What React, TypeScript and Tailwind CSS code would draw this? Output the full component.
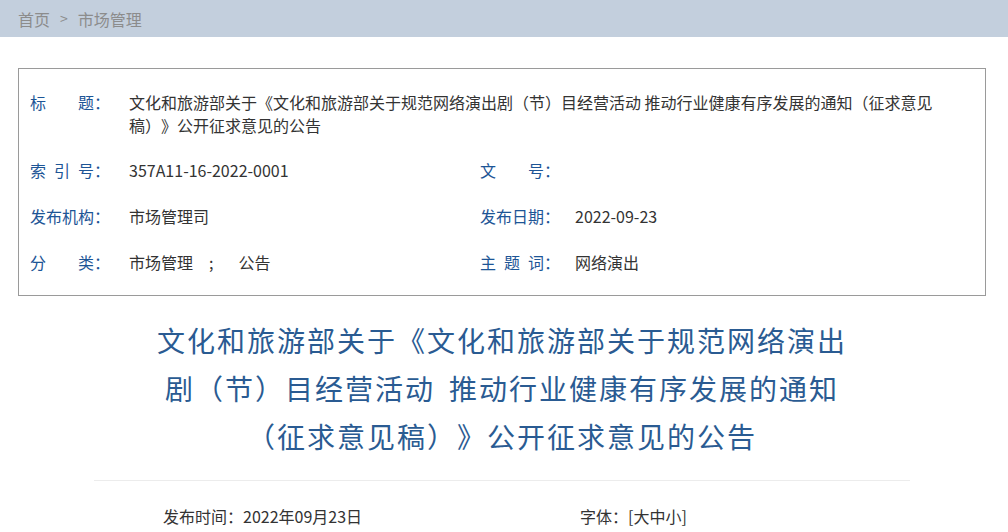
import React from "react";

const font = { fontFamily: '"Noto Sans CJK SC", "Noto Sans", sans-serif' };

function Row({ children }: { children: React.ReactNode }) {
  return <div className="flex h-[46px] items-center">{children}</div>;
}

export default function App() {
  return (
    <div className="w-[1008px] h-[532px] overflow-hidden bg-white [text-spacing-trim:space-all]" style={font}>
      <div className="h-[37px] bg-[#c3cfdd] flex items-center pl-[18px] text-[16px] text-[#8c8c8c]">
        <span>首页</span>
        <span className="ml-[10px] mr-[10px] text-[14px]">&gt;</span>
        <span>市场管理</span>
      </div>
      <div className="mx-[18px] w-[968px]">
        <div className="mt-[31px] border border-[#9a9a9a] pt-[22px] pb-[10px] pl-[11px] text-[16px]">
          <div className="flex leading-[23px] mb-[10px]">
            <div className="w-[99px] shrink-0 text-[#1d5596]">标　　题：</div>
            <div className="text-[#333]">
              文化和旅游部关于《文化和旅游部关于规范网络演出剧（节）目经营活动&nbsp;推动行业健康有序发展的通知（征求意见
              <br />
              稿）》公开征求意见的公告
            </div>
          </div>
          <Row>
            <div className="w-[450px] flex">
              <div className="w-[99px] text-[#1d5596]">索&ensp;引&ensp;号：</div>
              <div className="text-[#333]">357A11-16-2022-0001</div>
            </div>
            <div className="flex">
              <div className="w-[95px] text-[#1d5596]">文　　号：</div>
              <div className="text-[#333]"></div>
            </div>
          </Row>
          <Row>
            <div className="w-[450px] flex">
              <div className="w-[99px] text-[#1d5596]">发布机构：</div>
              <div className="text-[#333]">市场管理司</div>
            </div>
            <div className="flex">
              <div className="w-[95px] text-[#1d5596]">发布日期：</div>
              <div className="text-[#333]">2022-09-23</div>
            </div>
          </Row>
          <Row>
            <div className="w-[450px] flex">
              <div className="w-[99px] text-[#1d5596]">分　　类：</div>
              <div className="text-[#333] flex">
                <span>市场管理</span>
                <span className="ml-[16px]">;</span>
                <span className="ml-[25px]">公告</span>
              </div>
            </div>
            <div className="flex">
              <div className="w-[95px] text-[#1d5596]">主&ensp;题&ensp;词：</div>
              <div className="text-[#333]">网络演出</div>
            </div>
          </Row>
        </div>

        <div className="mt-[20px] text-center text-[28px] leading-[48px] tracking-[2px] text-[#2a5b92]">
          <div>文化和旅游部关于《文化和旅游部关于规范网络演出</div>
          <div>
            剧（节）目经营活动<span className="inline-block w-[14px]" />推动行业健康有序发展的通知
          </div>
          <div>（征求意见稿）》公开征求意见的公告</div>
        </div>

        <div className="mt-[20px] mx-[76px] h-px bg-[#ececec]" />

        <div className="mt-[23px] flex pl-[145px] text-[16px] leading-[24px] text-[#333]">
          <div className="w-[417px]">发布时间：2022年09月23日</div>
          <div>字体：[大中小]</div>
        </div>
      </div>
    </div>
  );
}
